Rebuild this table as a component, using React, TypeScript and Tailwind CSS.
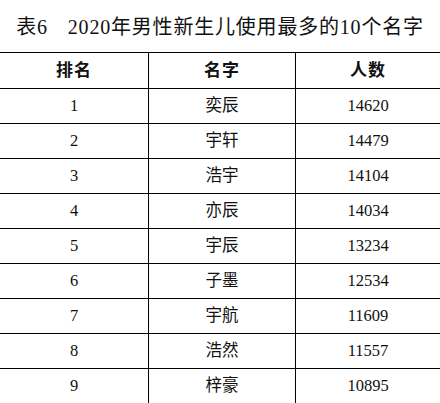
const rows: [string, string, string][] = [
  ['1', '奕辰', '14620'],
  ['2', '宇轩', '14479'],
  ['3', '浩宇', '14104'],
  ['4', '亦辰', '14034'],
  ['5', '宇辰', '13234'],
  ['6', '子墨', '12534'],
  ['7', '宇航', '11609'],
  ['8', '浩然', '11557'],
  ['9', '梓豪', '10895'],
];

const font = "font-['Liberation_Serif','Noto_Sans_CJK_SC',serif]";

export default function App() {
  return (
    <div className={`w-[440px] h-[403px] overflow-hidden bg-white text-[#111] ${font}`}>
      <div className="h-[52px] flex items-center justify-center pt-[2px] text-[20px] tracking-[0.8px]">
        <span>表6</span>
        <span className="ml-[20px]">2020年男性新生儿使用最多的10个名字</span>
      </div>
      <div className="grid grid-cols-[148px_147px_145px] h-[36px] border-t border-black font-bold text-[17px] tracking-[1px]">
        <div className="flex items-center justify-center">排名</div>
        <div className="flex items-center justify-center border-l border-black">名字</div>
        <div className="flex items-center justify-center border-l border-black">人数</div>
      </div>
      {rows.map(([rank, name, count]) => (
        <div key={rank} className="grid grid-cols-[148px_147px_145px] h-[35px] border-t border-black text-[16.5px]">
          <div className="flex items-center justify-center">{rank}</div>
          <div className="flex items-center justify-center border-l border-black">{name}</div>
          <div className="flex items-center justify-center border-l border-black">{count}</div>
        </div>
      ))}
    </div>
  );
}
